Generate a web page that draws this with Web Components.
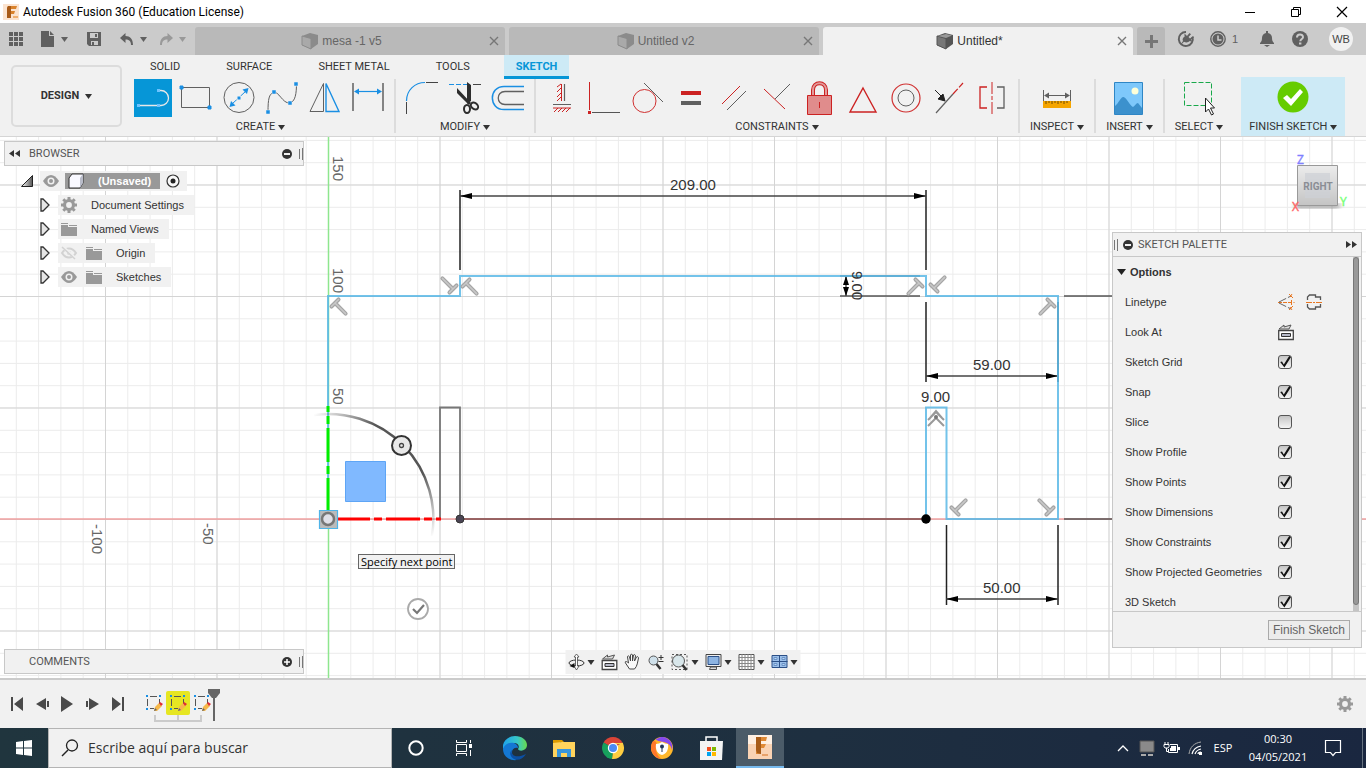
<!DOCTYPE html>
<html lang="en">
<head>
<meta charset="utf-8">
<title>Autodesk Fusion 360 (Education License)</title>
<style>
    html, body {
        height: 100%;
        margin: 0;
        overflow: hidden;
    }

    body {
        font-family: "Liberation Sans", Arial, sans-serif;
        font-size: 11px;
        line-height: 16px;
        color: #333;
    }
</style>
</head>
<body>
<fusion-app></fusion-app>

<script>
// Icon markup by name: [width, height, svg content]
const ICONS = {
    logo: [16, 16, '<rect width="16" height="16" fill="#fbe3cf"/><path d="M5 2h9l-1 3H8v2h4l-1 3H8v4H4V4z" fill="#d9822b"/><path d="M5 2h3v12H4V4z" fill="#a85a17"/><path d="M10 12h5v2h-5z" fill="#f0b070"/>'],
    minimize: [12, 12, '<path d="M1 6.500h10" stroke="#000"/>'],
    restore: [12, 12, '<path d="M1.500 3.500h7v7h-7zM3.500 3.500v-2h7v7h-2" fill="none" stroke="#000"/>'],
    close: [12, 12, '<path d="M1 1l10 10M11 1L1 11" stroke="#000" stroke-width="1.200"/>'],
    apps: [14, 14, '<path d="M0 0h4v4H0zM5 0h4v4H5zM10 0h4v4h-4zM0 5h4v4H0zM5 5h4v4H5zM10 5h4v4h-4zM0 10h4v4H0zM5 10h4v4H5zM10 10h4v4h-4z" fill="#606060"/>'],
    file: [14, 16, '<path d="M0 0h8v5h5v11H0zM9 0l4 4H9z" fill="#606060"/>'],
    save: [14, 14, '<path d="M0 0h14v14H2l-2-2z" fill="#606060"/><path d="M3 1h8v5H3zM4 9h7v4H4z" fill="#cbcbcb"/><path d="M8 2h2v3H8zM5 10h2v3H5z" fill="#606060"/>'],
    undo: [14, 13, '<path d="M5.500 0v3C10 3 13 6 13 12h-2C11 8 9 6.500 5.500 6.500V10L0 5z" fill="#606060"/>'],
    redo: [14, 13, '<path d="M8.500 0v3C4 3 1 6 1 12h2C3 8 5 6.500 8.500 6.500V10L14 5z" fill="#999"/>'],
    arrow: [7, 5, '<path d="M0 0h7L3.500 5z" fill="currentColor"/>'],
    cube: [16, 16, '<path d="M8 0l8 2v9l-7 5-9-4V3z" fill="#8b8b8b"/><path d="M0 3l9 2.500V16l-9-4z" fill="#a9a9a9" stroke="#8b8b8b"/>'],
    cubeDark: [16, 16, '<path d="M8 0l8 2v9l-7 5-9-4V3z" fill="#555"/><path d="M0 3l9 2.500V16l-9-4z" fill="#777" stroke="#555"/><path d="M1 3l8-2 6 1.500-6 2.500z" fill="#999"/>'],
    tabClose: [10, 10, '<path d="M1 1l8 8M9 1L1 9" stroke="#777" stroke-width="1.400"/>'],
    plus: [13, 13, '<path d="M5 0h3v5h5v3H8v5H5V8H0V5h5z" fill="#777"/>'],
    extension: [16, 16, '<path d="M14.500 6A7 7 0 1 1 8 1" fill="none" stroke="#606060" stroke-width="2"/><path d="M3 13l2-3c-1-2 0-3 1-4l1-1-1-1 1-1 2 2 2.500-3 1.500 1.300L10.500 6l1.500 1.500L15 5l1 1.300-3 2.500 1 1-1 1-1-1c-2 2-4 2-6 1l-2 2z" fill="#606060"/>'],
    clock: [16, 16, '<circle cx="8" cy="8" r="7.200" fill="none" stroke="#606060" stroke-width="1.400"/><circle cx="8" cy="8" r="5.500" fill="#606060"/><path d="M8 4.500V9h3.500" fill="none" stroke="#cbcbcb" stroke-width="1.500"/>'],
    bell: [14, 16, '<path d="M6 0h2v2c3 .5 4 3 4 5 0 3 1 4 2 5v1H0v-1c1-1 2-2 2-5 0-2 1-4.500 4-5zM4 14h6l-3 2z" fill="#606060"/>'],
    help: [16, 16, '<circle cx="8" cy="8" r="8" fill="#606060"/><path d="M5 6.500C5 2.500 11 2.500 11 6.200 11 8 8.300 8 8.300 10.200" fill="none" stroke="#cbcbcb" stroke-width="2"/><path d="M7 11.500h2.400v2H7z" fill="#cbcbcb"/>'],

    // sketch tools
    line: [38, 38, '<rect width="38" height="38" fill="#0696d7"/><path d="M5 26.500h20M25 11.500h2a7.500 7.500 0 0 1 0 15h-2" fill="none" stroke="#e8e8e8" stroke-width="1.300"/><path d="M3 25h3v3H3zM23 25h3v3h-3zM23 10h3v3h-3z" fill="#6cc3ff"/>'],
    rect: [32, 32, '<path d="M1.500 5.500h28v20h-28z" fill="none" stroke="#606060"/><path d="M0 4h3v3H0zM28 24h3v3h-3z" fill="#1a8fe3" stroke="#1a8fe3"/>'],
    circle: [32, 32, '<circle cx="16" cy="15.500" r="15" fill="none" stroke="#606060"/><path d="M9 22L23 9" stroke="#1a8fe3"/><path d="M6.500 25l1.500-6 4.500 4.500zM25.500 6l-6 1.500 4.500 4.500z" fill="#1a8fe3"/><path d="M14 14h4v4h-4z" fill="#1a8fe3" stroke="#f1f1f1"/>'],
    spline: [32, 32, '<path d="M2 30C2 17 3 12 7.500 10.500c5-2 9 11 16 10.500 6-1 7-10 7-20" fill="none" stroke="#606060"/><path d="M0 28h4v4H0zM6 8h4v4H6zM22 19h4v4h-4zM28 0h4v4h-4z" fill="#1a8fe3" stroke="#f1f1f1" stroke-width=".5"/>'],
    mirror: [32, 32, '<path d="M14.500 1.500v28H1z" fill="none" stroke="#606060"/><path d="M17 1.500v28h13z" fill="none" stroke="#1a8fe3" stroke-width="1.400"/>'],
    dimension: [32, 32, '<path d="M1 1v28M31 1v28" stroke="#606060" stroke-width="1.500"/><path d="M5 9.500h22" stroke="#1a8fe3" stroke-width="1.200"/><path d="M2 9.500l5-3v6zM30 9.500l-5-3v6z" fill="#1a8fe3"/>'],
    fillet: [32, 32, '<path d="M.5 19C.5 8 9 .5 19 .5" fill="none" stroke="#1a8fe3" stroke-width="1.200"/><path d="M.5 20v12M20 .5h12" stroke="#444"/>'],
    trim: [32, 32, '<path d="M0 2.500h19" stroke="#1a8fe3" stroke-dasharray="5 2"/><path d="M24 2.500h8" stroke="#444"/><path d="M8 6l14 15-2 2L8 11zM18 0l4 3v16l-4 3z" fill="#2d2d2d"/><ellipse cx="18" cy="27" rx="3" ry="4" fill="none" stroke="#2d2d2d" stroke-width="2"/><ellipse cx="25.500" cy="24" rx="3" ry="4" fill="none" stroke="#2d2d2d" stroke-width="2" transform="rotate(-50 25.500 24)"/>'],
    offset: [32, 32, '<path d="M32 4.500H12C-3.500 4.500-3.500 27.500 12 27.500h20" fill="none" stroke="#1a8fe3" stroke-width="1.500"/><path d="M32 9.500H13c-9 0-9 13 0 13h19" fill="none" stroke="#606060" stroke-width="1.300"/>'],
    horizontal: [18, 32, '<path d="M8.500 2v17M0 26h18" stroke="#c22"/><path d="M4 5l4-3M4 10l4-4M4 15l4-4M4 19l4-4M1 30l4-4M5 30l4-4M9 30l4-4M13 30l4-4" stroke="#c22"/><path d="M11.500 2v17M0 22.500h18" stroke="#606060" stroke-width="1.200"/>'],
    coincident: [32, 32, '<path d="M.5 0v28" stroke="#c22"/><path d="M3 30.500h28" stroke="#555"/><path d="M-1 29h3v3h-3z" fill="#c22"/>'],
    tangent: [32, 32, '<circle cx="12.500" cy="19" r="11.500" fill="none" stroke="#d03030"/><path d="M12 1l19 19" stroke="#606060"/>'],
    equal: [20, 16, '<path d="M0 1h20v4H0z" fill="#c22"/><path d="M0 11h20v4H0z" fill="#606060"/>'],
    parallel: [24, 24, '<path d="M0 18L18 0" stroke="#c22"/><path d="M5 24L24 5" stroke="#606060"/>'],
    perpendicular: [28, 28, '<path d="M1 5l21 20" stroke="#c22"/><path d="M12 15L27 0" stroke="#606060"/>'],
    lock: [26, 34, '<path d="M6 14V9c0-9 13-9 13 0v5" fill="none" stroke="#c22" stroke-width="4"/><path d="M6 14V9c0-9 13-9 13 0v5" fill="none" stroke="#e39a9a" stroke-width="2"/><path d="M.5 14.500h24v19H.5z" fill="#e08c8c" stroke="#c22"/><path d="M12.500 21v6" stroke="#c22"/>'],
    midpoint: [28, 28, '<path d="M14 4L27 28H1z" fill="none" stroke="#c22" stroke-width="1.400"/>'],
    concentric: [30, 32, '<circle cx="15" cy="16" r="14" fill="none" stroke="#d03030" stroke-width="1.200"/><circle cx="15" cy="16" r="8" fill="none" stroke="#606060"/>'],
    collinear: [30, 32, '<path d="M2 31L19 12" stroke="#606060" stroke-width="1.200"/><path d="M19 12L29 1" stroke="#c22" stroke-width="1.200" stroke-dasharray="7 2"/><path d="M1 8l6 6M11 19l-7-2 5-5z" fill="#222" stroke="#222"/>'],
    symmetry: [26, 32, '<path d="M8 5H1v21h7" fill="none" stroke="#c22" stroke-width="1.300"/><path d="M13 0v12M13 14v4M13 20v12" stroke="#c22"/><path d="M18 5h7v21h-7" fill="none" stroke="#606060" stroke-width="1.300"/>'],
    measure: [28, 32, '<path d="M.5 8v11M27.500 8v11M3 13.500h22" stroke="#606060"/><path d="M1 13.500l5-3v6zM27 13.500l-5-3v6z" fill="#606060"/><path d="M0 19h28v7H0z" fill="#f5a500"/><path d="M3 19v3M6 19v2M9 19v3M12 19v2M15 19v3M18 19v2M21 19v3M24 19v2" stroke="#704c00"/>'],
    image: [30, 33, '<path d="M.5.5h28v32H.5z" fill="#7ec8fb" stroke="#2f86c5"/><circle cx="21" cy="9" r="3.500" fill="#ffffd8"/><path d="M1 24c4-3 5-8 8-9s7 9 10 10c2-1 3-4 5-4l4 5v6H1z" fill="#3c91cd"/>'],
    select: [32, 36, '<path d="M1.500 2.500h27v23h-27z" fill="none" stroke="#19a84a" stroke-dasharray="5 2"/><path d="M22.500 18v14l3-3 3 6 2-1-3-6h4z" fill="#fff" stroke="#222"/>'],
    finish: [32, 36, '<circle cx="16" cy="17" r="15.500" fill="#6c0"/><path d="M6 18l4-3 4 4 9-10 3 3-12 14z" fill="#fff"/>'],

    // browser tree
    collapse: [11, 7, '<path d="M5 0v7L0 3.500zM11 0v7L6 3.500z" fill="#333"/>'],
    expand: [11, 7, '<path d="M0 0v7l5-3.500zM6 0v7l5-3.500z" fill="#333"/>'],
    minus: [10, 10, '<circle cx="5" cy="5" r="5" fill="#333"/><path d="M2 4h6v2H2z" fill="#f1f1f1"/>'],
    add: [10, 10, '<circle cx="5" cy="5" r="5" fill="#333"/><path d="M2 5h6M5 2v6" stroke="#fff" stroke-width="1.500"/>'],
    grip: [4, 12, '<path d="M.5 1v10M3.500 0v12" stroke="#777"/>'],
    open: [12, 12, '<defs><linearGradient id="o"><stop stop-color="#fff"/><stop offset="1" stop-color="#555"/></linearGradient></defs><path d="M11.500.5v11H.5z" fill="url(#o)" stroke="#222"/>'],
    closed: [10, 14, '<path d="M1 1h2l6 6-6 6H1z" fill="#e6e6e6" stroke="#333" stroke-width="1.300"/>'],
    eye: [16, 12, '<path d="M0 6c5-8 11-8 16 0-5 8-11 8-16 0z" fill="#999"/><circle cx="8" cy="6" r="3.500" fill="#f1f1f1"/><circle cx="8" cy="6" r="2" fill="#999"/>'],
    eyeOff: [16, 12, '<path d="M1 6c4-6 10-6 14 0-4 6-10 6-14 0z" fill="none" stroke="#d2d2d2" stroke-width="2"/><circle cx="8" cy="6" r="2" fill="#d2d2d2"/><path d="M2 0l13 12" stroke="#f1f1f1" stroke-width="3"/><path d="M1 0l13 12" stroke="#d2d2d2" stroke-width="1.500"/>'],
    gear: [16, 16, '<circle cx="8" cy="8" r="4.500" fill="none" stroke="#999" stroke-width="3.200"/><path d="M8 0v3M8 13v3M0 8h3M13 8h3M2.300 2.300l2 2M11.700 11.700l2 2M2.300 13.700l2-2M11.700 4.300l2-2" stroke="#999" stroke-width="3"/>'],
    folder: [16, 13, '<path d="M0 2h7v2h9v9H0z" fill="#999"/><path d="M0 .5h7M8 2.500h8" stroke="#999"/>'],
    box: [17, 17, '<path d="M1 5l3-4h11v9l-3 5H1z" fill="#f8f8ff" stroke="#333"/><path d="M12 5l3-4v9l-3 5z" fill="#b9bcc9"/>'],
    radio: [14, 14, '<circle cx="7" cy="7" r="6" fill="#f8f8f8" stroke="#333" stroke-width="1.200"/><circle cx="7" cy="7" r="2.500" fill="#222"/>'],

    // sketch palette
    construction: [16, 16, '<path d="M0 8.500h13" stroke="#e87722" stroke-dasharray="4 1"/><path d="M1 8l12-6M1 9l12 6" stroke="#666" stroke-dasharray="8 2"/><path d="M13.500 6v5M15.500 8.500h1" stroke="#e87722"/><path d="M11 0l4 4M14 0l-2 3M11 16l4-4M14 16l-2-3" stroke="#e87722"/>'],
    centerline: [16, 16, '<path d="M1.500 6V3l2-2h6v2h5v3M1.500 10v3l2 2h6v-2h5v-3" fill="none" stroke="#555" stroke-width="1.300"/><path d="M0 8.500h6M7 8.500h2M10 8.500h6" stroke="#e87722"/>'],
    lookAt: [16, 16, '<path d="M.7 6.500h14.600v9H.7z" fill="#fff" stroke="#444" stroke-width="1.300"/><path d="M3.500 9.500h9v3h-9z" fill="#b6b9c8" stroke="#333"/><path d="M1 5l5-4v2l7-2-2 4z" fill="#ddd" stroke="#555"/>'],

    // navigation bar
    orbit: [16, 16, '<ellipse cx="8" cy="9" rx="7.500" ry="3" fill="none" stroke="#333"/><path d="M8 0l2.500 3H9v9h1.500L8 16l-2.500-4H7V3H5.500z" fill="#fff" stroke="#444" stroke-width=".8"/><path d="M1 12l5-3v5z" fill="#111"/>'],
    hand: [16, 16, '<path d="M5 15L1 9c-1-2 1-2 3 0L3 3c0-2 2-1 2 0l1 4V1c0-1 2-1 2 0v6l1-6c1-1 2 0 2 1l-1 5 2-4c1-1 2 0 2 1-1 4-1 8-4 11z" fill="#f9f9f9" stroke="#444"/>'],
    zoom: [17, 16, '<circle cx="6" cy="6.500" r="4.500" fill="#cfe0ea" stroke="#555"/><path d="M9 10l4 5" stroke="#333" stroke-width="2.500"/><path d="M11 3.500h5M13.500 1v5M11 7.500h5" stroke="#333"/>'],
    zoomWindow: [17, 16, '<path d="M.5.500h15v15H.5z" fill="none" stroke="#555" stroke-dasharray="2 2"/><circle cx="7" cy="7" r="6" fill="#d8e6ea" stroke="#555"/><path d="M11 11l4 5" stroke="#333" stroke-width="2.500"/>'],
    display: [16, 16, '<path d="M.5.500h15v12H.5z" fill="#eee" stroke="#444"/><path d="M2.500 2.500h11v8h-11z" fill="#8db4e2" stroke="#2b4f86"/><path d="M5 13h6v2.500H4z" fill="#ddd" stroke="#555"/>'],
    grid: [16, 16, '<path d="M.5.500h15v15H.5z" fill="#fff" stroke="#555"/><path d="M3.500 0v16M6.500 0v16M9.500 0v16M12.500 0v16M0 3.500h16M0 6.500h16M0 9.500h16M0 12.500h16" stroke="#888"/>'],
    viewports: [16, 14, '<path d="M.5.500h15v12H.5z" fill="#9cc0ea" stroke="#2b4f86"/><path d="M8 0v13M0 6.500h16" stroke="#2b4f86"/><path d="M2.500 2.500h3v2h-3zM10.500 2.500h3v2h-3zM2.500 8.500h3v2h-3zM10.500 8.500h3v2h-3z" fill="#b9d6f4" stroke="#6a92c6"/>'],

    // timeline
    first: [13, 14, '<path d="M0 0h2v14H0zM12 0v14L3 7z" fill="#4a4a4a"/>'],
    prev: [13, 14, '<path d="M10 1v12L0 7zM11 4h2v6h-2z" fill="#4a4a4a"/>'],
    play: [12, 16, '<path d="M0 0l12 8-12 8z" fill="#4a4a4a"/>'],
    next: [13, 14, '<path d="M3 1v12l10-6zM0 4h2v6H0z" fill="#4a4a4a"/>'],
    last: [13, 14, '<path d="M11 0h2v14h-2zM1 0v14l9-7z" fill="#4a4a4a"/>'],
    feature: [18, 18, '<path d="M5 2.500h7M2.500 5v7M14.500 5v5M5 14.500h4" stroke="#555"/><path d="M1 1h2v2H1zM14 1h2v2h-2zM1 14h2v2H1z" fill="#1a8fe3"/><path d="M9 17l1-4 4-4 3 3-5 5z" fill="#f6b84a"/><path d="M14 9l1-1 3 2-2 2z" fill="#e02b35"/><path d="M9 17l1-3 2 2z" fill="#666"/>'],
    marker: [12, 32, '<path d="M0 0h12v4l-4 5H4L0 4z" fill="#666"/><path d="M6 8v24" stroke="#666" stroke-width="2"/>'],

    // windows taskbar
    windows: [16, 16, '<path d="M0 2l7-1v6.500H0zM8 1l8-1v7.500H8zM0 8.500h7V15l-7-1zM8 8.500h8V16l-8-1z" fill="#fff"/>'],
    search: [18, 18, '<circle cx="11" cy="6.500" r="5.500" fill="none" stroke="#222" stroke-width="1.300"/><path d="M7 11l-6 6" stroke="#222" stroke-width="1.500"/>'],
    cortana: [16, 16, '<circle cx="8" cy="8" r="6.700" fill="none" stroke="#fff" stroke-width="2"/>'],
    taskView: [17, 16, '<path d="M.5 0v2.500h10V0M.5 16v-2.500h10V16M.5 4.500h10v7H.500zM14.500 0v3M14.500 10v6" fill="none" stroke="#fff"/><path d="M13 4h3v4h-3z" fill="#fff"/>'],
    edge: [24, 24, '<defs><linearGradient id="e1" x1="0" y1="0" x2="1" y2="0"><stop stop-color="#1fa2ec"/><stop offset=".6" stop-color="#37c8c8"/><stop offset="1" stop-color="#68d84c"/></linearGradient></defs><path d="M12 0c7 0 12 4 12 9 0 6-8 7-9 4 2-3 0-6-4-6C5 7 1 11 0 14V9c1-5 6-9 12-9z" fill="url(#e1)"/><path d="M0 13C2 8 6 6 11 7c3 1 4 3 4 5-3-1-6 1-6 4 0 3 2 7 5 8C6 25 0 20 0 13z" fill="#1478d4"/><path d="M9 14c-2 5 4 9 14 4-3 5-8 7-12 5-4-2-5-7-2-9z" fill="#0c4fa3"/>'],
    explorer: [22, 19, '<path d="M0 1h9l2 2h-4v3H0z" fill="#dd9b00"/><path d="M0 4l9-1h13v15H0z" fill="#ffd35c"/><path d="M4 18v-8h14v8h-4v-4H8v4z" fill="#3795dc"/>'],
    chrome: [22, 22, '<path d="M11 11L1.500 5.500a11 11 0 0 1 19 0z" fill="#da4437"/><path d="M11 11l9.500-5.500A11 11 0 0 1 10 22z" fill="#ffcd41"/><path d="M11 11l-1 11A11 11 0 0 1 1.500 5.500z" fill="#17a05d"/><path d="M11 6h9.700l.5 1H13z" fill="#ffcd41"/><circle cx="11" cy="11" r="5.200" fill="#fff"/><circle cx="11" cy="11" r="4" fill="#4c8bf5"/>'],
    vpn: [22, 22, '<circle cx="11" cy="11" r="11" fill="#ffb72b"/><path d="M10 0c7-1 13 6 11 13-1-5-4-7-8-8S5 4 5 2z" fill="#8549ef"/><path d="M2 4c4 0 4 2 3 6s2 9 5 12C2 21-3 11 2 4z" fill="#ff772b"/><path d="M5 7c2 0 4-1 6-2 2 1 4 2 6 2 1 6-2 10-6 11-4-1-7-5-6-11z" fill="#fff"/><circle cx="11" cy="9.500" r="2" fill="#24385b"/><path d="M10.500 10h1v5h-1z" fill="#24385b"/>'],
    store: [24, 24, '<path d="M7 6V1h11v5" fill="none" stroke="#fff" stroke-width="1.500"/><path d="M1 5h23l-1 19H1z" fill="#f4f4f4"/><path d="M8 11h4v4H8z" fill="#f25022"/><path d="M13 11h4v4h-4z" fill="#7fba00"/><path d="M8 16h4v4H8z" fill="#00a4ef"/><path d="M13 16h4v4h-4z" fill="#ffb900"/>'],
    fusion: [24, 24, '<rect width="24" height="24" fill="#fff0e2"/><path d="M0 9h24v15H0z" fill="#fad3b3"/><path d="M8 2h11l-1 4h-5v3h5l-2 4h-3v6H8z" fill="#e08a35"/><path d="M8 2h5v17l-4-1-1-3z" fill="#a85c18"/><path d="M14 20h6" stroke="#e8a26a" stroke-width="2"/>'],
    chevron: [12, 8, '<path d="M1 7l5-5 5 5" fill="none" stroke="#fff" stroke-width="1.300"/>'],
    touchpad: [15, 15, '<path d="M0 0h14v11H0z" fill="#8a8a8a" stroke="#555"/><path d="M1 13h5v2H1zM8 13h5v2H8z" fill="#aaa"/>'],
    battery: [17, 12, '<path d="M2 0v2M5 0v2M1 2.500h5v2l-1 1.500H2L1 4.500zM3.500 6v3.500h2" fill="none" stroke="#fff"/><path d="M7 2.500h7.500v8h-9V7" fill="none" stroke="#fff"/><path d="M8 4h5v5H7V6h1zM15 5h2v3h-2z" fill="#fff"/>'],
    wifi: [14, 14, '<path d="M1 13C2 6 6 2 13 1" fill="none" stroke="#aaa"/><path d="M4 13c1-4 3-7 9-8M7 13c1-3 2-4 6-5M10 13c0-1 1-2 3-2" fill="none" stroke="#fff" stroke-width="1.200"/><path d="M11 11h3v3h-3z" fill="#fff"/>'],
    notice: [17, 16, '<path d="M.5.500h15v12h-5L8 15.500l-2.500-3h-5z" fill="none" stroke="#fff" stroke-width="1.200"/>']
};

// Rules that every shadow root starts with
const BASE = `
    * { box-sizing: border-box; }
    :host { display: block; }
    button, input { font: inherit; color: inherit; margin: 0; padding: 0; border: 0; background: none; border-radius: 0; }
    button { display: flex; align-items: center; justify-content: center; white-space: nowrap; }
`;

const icon = (name) => `<ui-icon name="${name}"></ui-icon>`;
const iconButton = (name, label) => `<button aria-label="${label || name}">${icon(name)}</button>`;

/**
 * UiElement - common base, renders its markup into an open shadow root
 */
class UiElement extends HTMLElement {
    constructor() {
        super();
        this.attachShadow({ mode: 'open' });
    }

    connectedCallback() {
        this.shadowRoot.innerHTML = `<style>${BASE}${this.styles()}</style>${this.render()}`;
    }

    styles() { return ''; }
    render() { return '<slot></slot>'; }
}

/**
 * UiIcon - one inline svg, drawn at its own size
 */
class UiIcon extends UiElement {
    styles() {
        return `
            :host { display: inline-flex; flex: none; }
            svg { display: block; overflow: visible; }
        `;
    }

    render() {
        const [w, h, body] = ICONS[this.getAttribute('name')];
        return `<svg width="${w}" height="${h}" viewBox="0 0 ${w} ${h}" aria-hidden="true">${body}</svg>`;
    }
}

class TitleBar extends UiElement {
    styles() {
        return `
            :host { display: flex; align-items: center; height: 23px; padding: 0 1px 0 3px; background: #fff; color: #000; font: 12px/16px Roboto, sans-serif; }
            h1 { flex: 1; margin: 0 4px; font: inherit; }
            button { width: 46px; height: 23px; }
        `;
    }

    render() {
        return `${icon('logo')}<h1><slot></slot></h1>
            ${iconButton('minimize')}${iconButton('restore')}${iconButton('close')}`;
    }
}

class DocTab extends UiElement {
    styles() {
        return `
            :host { display: flex; flex: 1; min-width: 0; height: 28px; padding-right: 6px; background: #b9b9b9; color: #666; border-radius: 3px 3px 0 0; font-size: 12px; }
            :host([active]) { background: #f1f1f1; color: #333; }
            .name { flex: 1; gap: 4px; }
            .close { width: 10px; }
        `;
    }

    render() {
        return `<button class="name">${icon(this.hasAttribute('active') ? 'cubeDark' : 'cube')}<slot></slot></button>
            <button class="close" aria-label="Close tab">${icon('tabClose')}</button>`;
    }
}

class TabBar extends UiElement {
    styles() {
        return `
            :host { display: flex; align-items: flex-end; gap: 4px; height: 32px; background: #cbcbcb; color: #606060; }
            .quick { display: flex; align-items: center; width: 191px; height: 32px; padding-left: 9px; }
            .quick button { height: 32px; gap: 6px; }
            .quick .file { margin-left: 18px; }
            .quick .save { margin-left: 19px; }
            .quick .undo { margin-left: 19px; }
            .quick .redo { margin-left: 12px; color: #999; }
            .add { width: 28px; height: 28px; background: #b9b9b9; border-radius: 3px 3px 0 0; }
            .user { display: flex; align-items: center; height: 32px; width: 197px; padding-left: 5px; }
            .user button { height: 32px; width: 24px; }
            .user .jobs { width: 28px; gap: 6px; margin-left: 12px; }
            .user .bell { margin-left: 17px; }
            .user .help { margin-left: 9px; }
            .user .avatar { width: 24px; height: 24px; margin-left: 17px; border-radius: 12px; background: #f1f1f1; color: #444; }
        `;
    }

    render() {
        return `
            <div class="quick">
                <button aria-label="Data panel">${icon('apps')}</button>
                <button class="file" aria-label="File">${icon('file')}${icon('arrow')}</button>
                <button class="save" aria-label="Save">${icon('save')}</button>
                <button class="undo" aria-label="Undo">${icon('undo')}${icon('arrow')}</button>
                <button class="redo" aria-label="Redo">${icon('redo')}${icon('arrow')}</button>
            </div>
            <slot></slot>
            <button class="add" aria-label="New design">${icon('plus')}</button>
            <div class="user">
                ${iconButton('extension', 'Extensions')}
                <button class="jobs">${icon('clock')}<span>1</span></button>
                <button class="bell" aria-label="Notifications">${icon('bell')}</button>
                <button class="help" aria-label="Help">${icon('help')}</button>
                <button class="avatar">WB</button>
            </div>`;
    }
}

/**
 * ToolGroup - a row of tool buttons over a drop-down label
 */
class ToolGroup extends UiElement {
    styles() {
        return `
            :host { display: flex; flex-direction: column; align-items: center; padding: 0 7px; border-right: 2px solid #dcdcdc; height: 54px; }
            :host([wide]) { padding: 0 10px; }
            :host([last]) { border-right: 0; }
            :host([accent]) { border: 0; padding: 2px 8px 0; margin: -2px 0 0 8px; background: #cdeaf6; height: 59px; }
            .tools { display: flex; flex: none; gap: 5px; }
            .tools button { width: 38px; height: 38px; }
            .label { flex: none; gap: 3px; height: 20px; }
        `;
    }

    render() {
        const tools = this.getAttribute('tools').split(' ');
        return `<div class="tools">${tools.map((t) => iconButton(t)).join('')}</div>
            <button class="label"><slot></slot>${icon('arrow')}</button>`;
    }
}

class RibbonBar extends UiElement {
    styles() {
        return `
            :host { display: flex; height: 82px; padding-left: 11px; background: #f1f1f1; border-bottom: 1px solid #d5d5d5; font-family: Roboto, sans-serif; }
            .workspace { flex: none; width: 111px; height: 62px; margin-top: 10px; gap: 6px; border: 2px solid #dcdcdc; border-radius: 5px; font-weight: 700; }
            nav { display: flex; gap: 22px; margin-left: 16px; height: 24px; }
            nav button { padding: 0 12px; }
            nav button[aria-current] { background: #cdeaf6; color: #0696d7; font-weight: 700; border-bottom: 3px solid #0696d7; padding-top: 2px; }
            .groups { display: flex; margin-left: 5px; }
        `;
    }

    render() {
        return `
            <button class="workspace">DESIGN ${icon('arrow')}</button>
            <div>
                <nav>
                    <button>SOLID</button>
                    <button>SURFACE</button>
                    <button>SHEET METAL</button>
                    <button>TOOLS</button>
                    <button aria-current="page">SKETCH</button>
                </nav>
                <div class="groups">
                    <tool-group tools="line rect circle spline mirror dimension">CREATE</tool-group>
                    <tool-group tools="fillet trim offset">MODIFY</tool-group>
                    <tool-group tools="horizontal coincident tangent equal parallel perpendicular lock midpoint concentric collinear symmetry">CONSTRAINTS</tool-group>
                    <tool-group wide tools="measure">INSPECT</tool-group>
                    <tool-group wide tools="image">INSERT</tool-group>
                    <tool-group wide last tools="select">SELECT</tool-group>
                    <tool-group accent tools="finish">FINISH SKETCH</tool-group>
                </div>
            </div>`;
    }
}

/**
 * SketchCanvas - the drawing area: grid, axes, profile and dimensions.
 * Drawn in window coordinates, with the sketch origin at 328,519
 * and 2.23 pixels to the unit.
 */
class SketchCanvas extends UiElement {
    styles() {
        return `
            :host { position: relative; overflow: hidden; background: #fff; }
            svg { display: block; width: 100%; height: 100%; }
            text { font: 15px "Liberation Sans", Arial, sans-serif; fill: #333; }
            .ruler text { fill: #666; }
            .tip { position: absolute; left: 358px; top: 417px; padding: 0 2px; border: 1px solid #666; background: #f1f1f1; color: #000; font: 11px/13px "Open Sans", sans-serif; white-space: nowrap; }
        `;
    }

    gridPattern(id, size, color) {
        return `<pattern id="${id}" width="${size}" height="${size}" x="328" y="519" patternUnits="userSpaceOnUse">
            <path d="M0 .5H${size}M.5 0V${size}" stroke="${color}" fill="none"/></pattern>`;
    }

    arrowLine(x1, x2, y) {
        return `<path d="M${x1} ${y}H${x2}" stroke="#444" stroke-width="1.500"/>
            <path d="M${x1} ${y}l12-3v6zM${x2} ${y}l-12-3v6z" fill="#000"/>`;
    }

    render() {
        const perpendiculars = [
            [453, 289, 135], [466, 283, -45], [335, 303, -45], [919, 283, 45], [934, 288, -135],
            [1051, 303, 45], [955, 511, -135], [1050, 511, 135]
        ];
        return `
            <svg>
                <defs>
                    ${this.gridPattern('minor', 22.3, '#ebebeb')}
                    ${this.gridPattern('major', 111.5, '#d4d4d4')}
                    <linearGradient id="arc" x1="0" y1="0" x2="1" y2="1">
                        <stop offset="0" stop-color="#555" stop-opacity="0"/>
                        <stop offset=".3" stop-color="#555"/>
                        <stop offset=".7" stop-color="#555"/>
                        <stop offset="1" stop-color="#555" stop-opacity="0"/>
                    </linearGradient>
                    <g id="perp" stroke-linecap="round">
                        <path d="M-5 0H5M0 0V15" stroke="#a6a6a6" stroke-width="4"/>
                        <path d="M-5 0H5M0 0V15" stroke="#c8c8c8" stroke-width="1.500"/>
                    </g>
                </defs>
                <g transform="translate(0 -137)">
                    <rect y="137" width="100%" height="100%" fill="url(#minor)"/>
                    <rect y="137" width="100%" height="100%" fill="url(#major)"/>
                    <path d="M0 519h4000" stroke="#f0a0a0" stroke-width="1.300"/>
                    <path d="M328.500 137v2000" stroke="#8ee68e" stroke-width="1.500"/>

                    <g class="ruler">
                        <text transform="translate(333 156) rotate(90)">150</text>
                        <text transform="translate(333 268) rotate(90)">100</text>
                        <text transform="translate(333 388) rotate(90)">50</text>
                        <text transform="translate(203 523) rotate(90)">-50</text>
                        <text transform="translate(92 524) rotate(90)">-100</text>
                    </g>

                    <g stroke="#222" stroke-width="1.500">
                        <path d="M460 190v80M926 190v80M926 302v80M1058 302v80M946.500 525v80M1058 525v80"/>
                        <path d="M840 296h80M840 276h80M1064 296h50M1064 519h50M846 276v20" stroke="#555"/>
                    </g>
                    ${this.arrowLine(460, 926, 196)}
                    ${this.arrowLine(926, 1058, 376)}
                    ${this.arrowLine(946, 1058, 599)}
                    <path d="M846 276l3 9h-6zM846 296l3-9h-6z"/>

                    <path d="M328 519V296H460V276H926V296H1058V519H946.500V407.500H926V519" fill="none" stroke="#5bb8e6" stroke-opacity=".85" stroke-width="2"/>
                    <path d="M460 519H926" stroke="#7c4a4a" stroke-width="1.600"/>
                    <path d="M440 519V407.500H460V519" fill="none" stroke="#777" stroke-width="1.800"/>

                    <text x="670" y="190">209.00</text>
                    <text x="973" y="370">59.00</text>
                    <text x="983" y="593">50.00</text>
                    <text x="921" y="402">9.00</text>
                    <text transform="translate(852 271) rotate(90)">9.00</text>

                    ${perpendiculars.map(([x, y, r]) => `<use href="#perp" transform="translate(${x} ${y}) rotate(${r})"/>`).join('')}
                    <path d="M928 426l8-8 8 8M930 418l6-7 6 7M928 420l8-8 8 8" fill="none" stroke="#999" stroke-width="2"/>
                    <circle cx="936" cy="417" r="2" fill="#777"/>

                    <path d="M314 415A105 105 0 0 1 432 536" fill="none" stroke="url(#arc)" stroke-width="2.500"/>
                    <circle cx="401.500" cy="445.500" r="9.500" fill="#e8e8e8" stroke="#333" stroke-width="2"/>
                    <circle cx="401.500" cy="445.500" r="2" fill="none" stroke="#444" stroke-width="1.300"/>
                    <path d="M345.500 461.500h40v40h-40z" fill="#80b9ff" stroke="#5ea5f5"/>

                    <path d="M328 406v104" stroke="#0e0" stroke-width="3" stroke-dasharray="6 4 8 4 34 4 8 4 34"/>
                    <path d="M336 519h105" stroke="#f00" stroke-width="3" stroke-dasharray="34 4 8 4 34 4 8 4 6"/>
                    <path d="M319.500 510.500h18v18h-18z" fill="#bbb" stroke="#4fb4e8" stroke-width="1.200"/>
                    <circle cx="328" cy="519" r="6" fill="#e0e0e8" stroke="#777" stroke-width="2.500"/>
                    <circle cx="460" cy="519" r="4" fill="#4a4453" stroke="#333"/>
                    <circle cx="926" cy="519" r="4.700"/>

                    <circle cx="418" cy="609" r="10" fill="#fff" stroke="#aaa" stroke-width="1.800"/>
                    <path d="M413 609l4 4 7-8" fill="none" stroke="#777" stroke-width="2.200"/>
                </g>
            </svg>
            <div class="tip">Specify next point</div>
            <slot></slot>`;
    }
}

class ViewCube extends UiElement {
    styles() {
        return `
            svg { display: block; overflow: visible; }
            text { font: 12px "Open Sans", sans-serif; }
            .face { font: 700 10px Roboto, sans-serif; fill: #8a8d94; }
        `;
    }

    render() {
        return `
            <svg width="66" height="70">
                <defs>
                    <linearGradient id="f" x1="0" y1="0" x2="0" y2="1"><stop stop-color="#ececec"/><stop offset="1" stop-color="#c4c4c4"/></linearGradient>
                    <filter id="s"><feGaussianBlur stdDeviation="2"/></filter>
                </defs>
                <path d="M0 54h50l-6 4H4z" fill="#999" filter="url(#s)"/>
                <path d="M4.500 15.500h40v40h-40z" fill="url(#f)" stroke="#999"/>
                <path d="M12 23h25v25H12z" fill="#cdd0d6" opacity=".7"/>
                <text class="face" x="25" y="40" text-anchor="middle">RIGHT</text>
                <text x="4" y="14" fill="#8080ff" stroke="#8080ff" stroke-width=".4">Z</text>
                <text x="-1" y="61" fill="#f66" stroke="#f66" stroke-width=".4">X</text>
                <text x="47" y="56" fill="#7f7" stroke="#7f7" stroke-width=".4">Y</text>
            </svg>`;
    }
}

/**
 * PanelHeader - docked bar with a title between two icons
 */
class PanelHeader extends UiElement {
    styles() {
        return `
            :host { display: flex; align-items: center; height: 25px; padding-left: 4px; background: #f1f1f1; border: 1px solid #c8c8c8; font-family: Roboto, sans-serif; color: #555; }
            .title { flex: 1; }
            button { height: 23px; margin-right: 7px; }
            .lead { width: 20px; margin: 0; justify-content: flex-start; }
        `;
    }

    render() {
        const lead = this.getAttribute('lead');
        return `<button class="lead" aria-label="Dock">${lead ? icon(lead) : ''}</button>
            <span class="title"><slot></slot></span>
            ${iconButton(this.getAttribute('trail'))}${icon('grip')}`;
    }
}

class TreeRow extends UiElement {
    styles() {
        return `
            :host { display: flex; align-items: center; gap: 8px; height: 24px; padding-left: 36px; }
            .body { display: flex; align-items: center; gap: 9px; height: 20px; padding: 0 10px 0 3px; background: #f1f1f1; }
            .text { margin-left: 5px; white-space: nowrap; }
            :host([root]) { gap: 7px; padding-left: 17px; }
            :host([root]) .body { padding: 0 7px 0 3px; gap: 6px; }
            .selected { display: flex; align-items: center; gap: 13px; height: 16px; padding: 0 9px 0 3px; background: #999; color: #fff; font-weight: 700; }
        `;
    }

    render() {
        const icons = this.getAttribute('icons').split(' ').map((i) => icon(i)).join('');
        if (this.hasAttribute('root')) {
            return `${iconButton('open')}<div class="body">${icons}
                <span class="selected">${icon('box')}<slot></slot></span>${icon('radio')}</div>`;
        }
        return `${iconButton('closed')}<div class="body">${icons}<span class="text"><slot></slot></span></div>`;
    }
}

class BrowserPanel extends UiElement {
    styles() {
        return '.tree { padding-top: 3px; }';
    }

    render() {
        return `
            <panel-header lead="collapse" trail="minus">BROWSER</panel-header>
            <div class="tree">
                <tree-row root icons="eye">(Unsaved)</tree-row>
                <tree-row icons="gear">Document Settings</tree-row>
                <tree-row icons="folder">Named Views</tree-row>
                <tree-row icons="eyeOff folder">Origin</tree-row>
                <tree-row icons="eye folder">Sketches</tree-row>
            </div>`;
    }
}

/**
 * PaletteOption - label plus a tick box, or a few icon buttons
 */
class PaletteOption extends UiElement {
    styles() {
        return `
            :host { display: flex; align-items: center; height: 30px; padding-left: 12px; }
            label, .label { width: 153px; white-space: nowrap; }
            .buttons { display: flex; gap: 12px; }
            input { appearance: none; width: 14px; height: 14px; border: 1px solid #555; border-radius: 3px; background: linear-gradient(#c4c4c4, #f4f4f4); }
            input:checked::after { content: ""; display: block; width: 12px; height: 12px; background: #111; clip-path: polygon(10% 50%, 25% 45%, 40% 70%, 85% 0, 100% 8%, 45% 95%); }
        `;
    }

    render() {
        const label = this.getAttribute('label');
        if (this.hasAttribute('icons')) {
            const names = this.getAttribute('icons').split(' ');
            return `<span class="label">${label}</span><div class="buttons">${names.map((n) => iconButton(n)).join('')}</div>`;
        }
        return `<label for="box">${label}</label><input id="box" type="checkbox" ${this.hasAttribute('off') ? '' : 'checked'}>`;
    }
}

class SketchPalette extends UiElement {
    styles() {
        return `
            :host { display: flex; flex-direction: column; width: 250px; background: #f1f1f1; border: 1px solid #c8c8c8; }
            header { display: flex; flex: none; align-items: center; gap: 5px; height: 24px; padding: 0 4px 0 1px; border-bottom: 1px solid #c8c8c8; font-family: Roboto, sans-serif; color: #555; }
            header span { flex: 1; }
            .body { display: flex; flex: 1; min-height: 0; overflow: hidden; }
            .options { flex: 1; }
            .bar { width: 6px; margin-right: 2px; background: #c4c4c4; }
            .thumb { height: 348px; border-radius: 3px; background: #999; border: 1px solid #777; }
            h2 { display: flex; align-items: center; gap: 4px; height: 30px; margin: 0; padding-left: 4px; font-size: 11px; }
            footer { display: flex; flex: none; justify-content: flex-end; align-items: center; height: 36px; padding-right: 11px; border-top: 1px solid #c8c8c8; }
            footer button { height: 20px; padding: 0 4px; border: 1px solid #aaa; background: #ececec; color: #666; font-size: 12px; }
        `;
    }

    render() {
        return `
            <header>${icon('grip')}${icon('minus')}<span>SKETCH PALETTE</span>${icon('expand')}</header>
            <div class="body">
                <div class="options">
                    <h2><svg width="9" height="6"><path d="M0 0h9L4.500 6z" fill="#222"/></svg>Options</h2>
                    <palette-option label="Linetype" icons="construction centerline"></palette-option>
                    <palette-option label="Look At" icons="lookAt"></palette-option>
                    <palette-option label="Sketch Grid"></palette-option>
                    <palette-option label="Snap"></palette-option>
                    <palette-option label="Slice" off></palette-option>
                    <palette-option label="Show Profile"></palette-option>
                    <palette-option label="Show Points"></palette-option>
                    <palette-option label="Show Dimensions"></palette-option>
                    <palette-option label="Show Constraints"></palette-option>
                    <palette-option label="Show Projected Geometries"></palette-option>
                    <palette-option label="3D Sketch"></palette-option>
                </div>
                <div class="bar"><div class="thumb"></div></div>
            </div>
            <footer><button>Finish Sketch</button></footer>`;
    }
}

class NavBar extends UiElement {
    styles() {
        return `
            :host { display: flex; align-items: center; gap: 7px; height: 24px; padding: 0 3px; background: #f1f1f1; color: #333; }
            button { gap: 3px; height: 24px; }
        `;
    }

    render() {
        const menu = (name) => `<button aria-label="${name}">${icon(name)}${icon('arrow')}</button>`;
        return menu('orbit') + iconButton('lookAt') + iconButton('hand') + iconButton('zoom')
            + menu('zoomWindow') + menu('display') + menu('grid') + menu('viewports');
    }
}

class TimelineBar extends UiElement {
    styles() {
        return `
            :host { display: flex; align-items: center; height: 50px; padding: 0 13px 0 9px; border-top: 2px solid #cbcbcb; background: #f1f1f1; }
            .play { display: flex; gap: 9px; }
            .play button { width: 16px; height: 24px; }
            .history { display: flex; flex: 1; align-self: flex-start; align-items: flex-start; padding-top: 11px; margin-left: 17px; }
            .row { display: flex; }
            .row button { width: 24px; height: 24px; }
            .row .current { background: #e6e622; border-radius: 2px; }
            .bracket { display: flex; height: 7px; margin: 0 12px; border: solid #cbcbcb; border-width: 0 2px 2px; justify-content: center; }
            .bracket i { width: 2px; background: #cbcbcb; }
            .mark { margin: -2px 0 0 -6px; }
        `;
    }

    render() {
        return `
            <div class="play">${['first', 'prev', 'play', 'next', 'last'].map((n) => iconButton(n)).join('')}</div>
            <div class="history">
                <div>
                    <div class="row">${iconButton('feature')}<button class="current" aria-label="Current sketch">${icon('feature')}</button>${iconButton('feature')}</div>
                    <div class="bracket"><i></i></div>
                </div>
                <ui-icon class="mark" name="marker"></ui-icon>
            </div>
            ${iconButton('gear', 'Settings')}`;
    }
}

class TaskBar extends UiElement {
    styles() {
        return `
            :host { display: flex; height: 40px; background: linear-gradient(90deg, #20353e, #1e2f40 60%, #1a2740); color: #fff; font-family: "Open Sans", sans-serif; }
            button { width: 48px; height: 40px; flex: none; }
            .search { display: flex; align-items: center; gap: 9px; width: 344px; padding-left: 12px; background: #f1f1f1; border: 1px solid #b4b4b4; }
            .search input { flex: 1; font-size: 14px; color: #333; }
            .search input::placeholder { color: #333; opacity: 1; }
            .pinned { display: flex; gap: 1px; margin-left: 3px; }
            .active { background: #4b5b68; border-bottom: 2px solid #76b9ed; }
            .tray { display: flex; align-items: center; margin-left: auto; }
            .tray button { width: 24px; }
            .tray .lang { width: 32px; }
            .tray .time { width: 78px; flex-direction: column; line-height: 18px; }
            .tray .notice { width: 20px; margin: 0 19px 0 6px; }
            .tray .peek { width: 4px; border-left: 1px solid #66727f; }
        `;
    }

    render() {
        const apps = ['edge', 'explorer', 'chrome', 'vpn', 'store'];
        return `
            ${iconButton('windows', 'Inicio')}
            <label class="search">${icon('search')}<input type="text" aria-label="Buscar" placeholder="Escribe aquí para buscar"></label>
            ${iconButton('cortana')}${iconButton('taskView')}
            <div class="pinned">${apps.map((a) => iconButton(a)).join('')}<button class="active" aria-label="Fusion 360">${icon('fusion')}</button></div>
            <div class="tray">
                ${iconButton('chevron')}${iconButton('touchpad')}${iconButton('battery')}${iconButton('wifi')}
                <button class="lang">ESP</button>
                <button class="time"><span>00:30</span><span>04/05/2021</span></button>
                <button class="notice" aria-label="Notificaciones">${icon('notice')}</button>
                <button class="peek" aria-label="Escritorio"></button>
            </div>`;
    }
}

class FusionApp extends UiElement {
    styles() {
        return `
            :host { display: flex; flex-direction: column; height: 100%; }
            sketch-canvas { flex: 1; min-height: 0; }
            /* panels float over the drawing */
            browser-panel { position: absolute; left: 4px; top: 4px; width: 300px; }
            view-cube { position: absolute; right: 7px; top: 13px; }
            sketch-palette { position: absolute; right: 4px; top: 95px; bottom: 30px; }
            .comments { position: absolute; left: 4px; bottom: 4px; width: 300px; }
            nav-bar { position: absolute; left: 50%; bottom: 4px; transform: translateX(-50%); }
        `;
    }

    render() {
        return `
            <title-bar>Autodesk Fusion 360 (Education License)</title-bar>
            <tab-bar>
                <doc-tab>mesa -1 v5</doc-tab>
                <doc-tab>Untitled v2</doc-tab>
                <doc-tab active>Untitled*</doc-tab>
            </tab-bar>
            <ribbon-bar></ribbon-bar>
            <sketch-canvas>
                <browser-panel></browser-panel>
                <view-cube></view-cube>
                <sketch-palette></sketch-palette>
                <panel-header class="comments" trail="add">COMMENTS</panel-header>
                <nav-bar></nav-bar>
            </sketch-canvas>
            <timeline-bar></timeline-bar>
            <task-bar></task-bar>`;
    }
}

customElements.define('ui-icon', UiIcon);
customElements.define('title-bar', TitleBar);
customElements.define('doc-tab', DocTab);
customElements.define('tab-bar', TabBar);
customElements.define('tool-group', ToolGroup);
customElements.define('ribbon-bar', RibbonBar);
customElements.define('sketch-canvas', SketchCanvas);
customElements.define('view-cube', ViewCube);
customElements.define('panel-header', PanelHeader);
customElements.define('tree-row', TreeRow);
customElements.define('browser-panel', BrowserPanel);
customElements.define('palette-option', PaletteOption);
customElements.define('sketch-palette', SketchPalette);
customElements.define('nav-bar', NavBar);
customElements.define('timeline-bar', TimelineBar);
customElements.define('task-bar', TaskBar);
customElements.define('fusion-app', FusionApp);
</script>
</body>
</html>
